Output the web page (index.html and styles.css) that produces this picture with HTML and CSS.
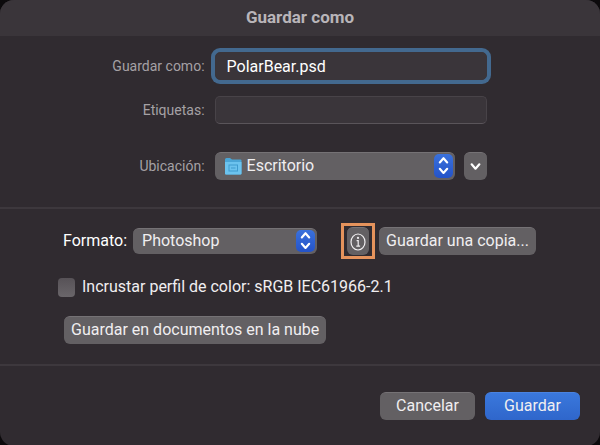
FILE: index.html
```html
<!DOCTYPE html>
<html lang="es">
  <head>
    <meta charset="UTF-8" />
    <meta name="viewport" content="width=device-width, initial-scale=1.0" />
    <title>Guardar como</title>
    <link rel="stylesheet" href="styles.css">
  </head>

  <body>
    <form class="dialog">
      <header class="titlebar">
        <h1>Guardar como</h1>
      </header>

      <section class="file">
        <label for="name">Guardar como:</label>
        <input class="field name" id="name" type="text" value="PolarBear.psd" />

        <label for="tags">Etiquetas:</label>
        <input class="field" id="tags" type="text" />

        <label class="place-label" for="place">Ubicación:</label>
        <div class="place-row">
          <div class="picker place">
            <select id="place">
              <option>Escritorio</option>
            </select>
            <svg class="folder" viewBox="0 0 18 18">
              <path d="M1 2Q1 .5 2.500 .5H6l2 1.500h8.500q1 0 1 1V16q0 1-1 1H2q-1 0-1-1z" fill="#4aa5d6" />
              <path d="M1 4.500h16.500V16q0 1-1 1H2q-1 0-1-1z" fill="#6cc3ee" />
              <rect x="5" y="7.500" width="8.500" height="6" fill="none" stroke="#3f9bce" />
              <path d="M7 10.500h4.500" stroke="#3f9bce" />
            </svg>
            <span class="arrows">
              <svg viewBox="0 0 18 22"><path d="M5.500 8 9 4l3.500 4M5.500 14 9 18l3.500-4" /></svg>
            </span>
          </div>
          <button class="btn expand" type="button" aria-label="Expandir">
            <svg viewBox="0 0 10 10"><path d="M1.500 3 5 7l3.500-4" /></svg>
          </button>
        </div>
      </section>

      <section class="options">
        <div class="format-row">
          <label for="format">Formato:</label>
          <div class="picker format">
            <select id="format">
              <option>Photoshop</option>
            </select>
            <span class="arrows">
              <svg viewBox="0 0 18 22"><path d="M5.500 8 9 4l3.500 4M5.500 14 9 18l3.500-4" /></svg>
            </span>
          </div>
          <div class="highlight">
            <button class="btn info" type="button" aria-label="Información">
              <svg viewBox="0 0 18 20">
                <ellipse cx="9" cy="10" rx="7" ry="8" />
                <path d="M7.600 8.700h1.600v5.300M7.300 14.200h3.800" />
                <circle class="dot" cx="9" cy="5.900" r="1.100" />
              </svg>
            </button>
          </div>
          <button class="btn copy" type="button">Guardar una copia...</button>
        </div>

        <div class="check-row">
          <input id="profile" type="checkbox" />
          <label for="profile">Incrustar perfil de color: sRGB IEC61966-2.1</label>
        </div>

        <button class="btn cloud" type="button">Guardar en documentos en la nube</button>
      </section>

      <footer class="actions">
        <button class="btn" type="button">Cancelar</button>
        <button class="btn primary" type="submit">Guardar</button>
      </footer>
    </form>
  </body>
</html>
```
FILE: styles.css
```css
* {
  box-sizing: border-box;
}

body {
  margin: 0;
  background-color: #0c0a0c;
  color: #f0eef0;
  font-family: Roboto, "Liberation Sans", sans-serif;
  font-size: 16px;
  line-height: 20px;
}

button,
input,
select {
  margin: 0;
  color: inherit;
  font: inherit;
}

.dialog {
  min-height: 100vh;
  border-radius: 14px;
  background-color: #302b30;
  overflow: hidden;
}

.titlebar {
  padding: 7px 8px 9px;
  background-color: #3a353a;
  text-align: center;
}

h1 {
  margin: 0;
  color: #b9b5b9;
  font-size: 17px;
  line-height: 20px;
  font-weight: 700;
}

.file {
  display: grid;
  grid-template-columns: 42% 1fr;
  column-gap: 10px;
  row-gap: 16px;
  align-items: center;
  padding: 16px 113px 27px 0;
  border-bottom: 2px solid #3d383d;
}

.file > label {
  color: #a5a1a5;
  font-size: 14px;
  text-align: right;
}

.field {
  width: 100%;
  height: 28px;
  padding: 0 11px;
  border: 1px solid #484348;
  border-bottom-color: #5a555a;
  border-radius: 5px;
  background-color: #3a353a;
  outline: none;
}

.name {
  border-color: #3a353a;
  color: #fff;
  box-shadow: 0 0 0 4px #43698f;
}

.place-row {
  display: flex;
  gap: 9px;
}

.place-row,
.place-label {
  margin-top: 12px;
}

.picker {
  position: relative;
}

.place {
  flex: 1;
}

.picker select {
  display: block;
  width: 100%;
  height: 28px;
  padding: 0 28px 2px 9px;
  border: 0;
  border-top: 1px solid #757275;
  border-radius: 6px;
  background-color: #636063;
  appearance: none;
}

.place select {
  padding-left: 32px;
}

.format select {
  height: 26px;
}

.folder {
  position: absolute;
  top: 5px;
  left: 9px;
  width: 18px;
  height: 19px;
}

.arrows {
  position: absolute;
  top: 2px;
  right: 2px;
  bottom: 2px;
  display: flex;
  align-items: center;
  width: 19px;
  border-radius: 5px;
  background: linear-gradient(#3a71dc, #2453c8);
  pointer-events: none;
}

svg {
  display: block;
  fill: none;
}

.arrows svg {
  width: 100%;
}

.arrows path,
.expand path {
  stroke: #fff;
  stroke-width: 2;
  stroke-linecap: round;
  stroke-linejoin: round;
}

.btn {
  height: 28px;
  padding: 0 7px 2px;
  border: 0;
  border-top: 1px solid #757275;
  border-radius: 6px;
  background-color: #636063;
  white-space: nowrap;
}

.expand {
  width: 23px;
  padding: 0 6px;
}

.options {
  padding: 14px 58px 20px;
  border-bottom: 2px solid #3d383d;
}

.format-row {
  display: flex;
  align-items: center;
}

.format-row label {
  padding: 0 6px 0 5px;
  color: #fff;
}

.format {
  flex: 0 1 184px;
}

.highlight {
  margin: 0 4px 0 24px;
  padding: 1px 3px;
  border: 3px solid #e5935c;
}

.info {
  display: block;
  height: 28px;
  width: 22px;
  padding: 0 2px;
}

.info svg {
  stroke: #f0eef0;
  stroke-width: 1.2;
}

.info .dot {
  fill: #f0eef0;
  stroke: none;
}

.check-row {
  display: flex;
  align-items: center;
  gap: 7px;
  margin: 18px 0 19px;
}

.check-row input {
  width: 17px;
  height: 19px;
  border-radius: 4px;
  background: linear-gradient(#575257, #6a666a);
  appearance: none;
}

.cloud {
  margin-left: 6px;
}

.actions {
  display: flex;
  justify-content: flex-end;
  gap: 10px;
  padding: 26px 20px;
}

.actions .btn {
  width: 95px;
}

.actions .primary {
  border-top-color: #4a83e0;
  background: linear-gradient(#3a78dc, #2f66cb);
}
```
